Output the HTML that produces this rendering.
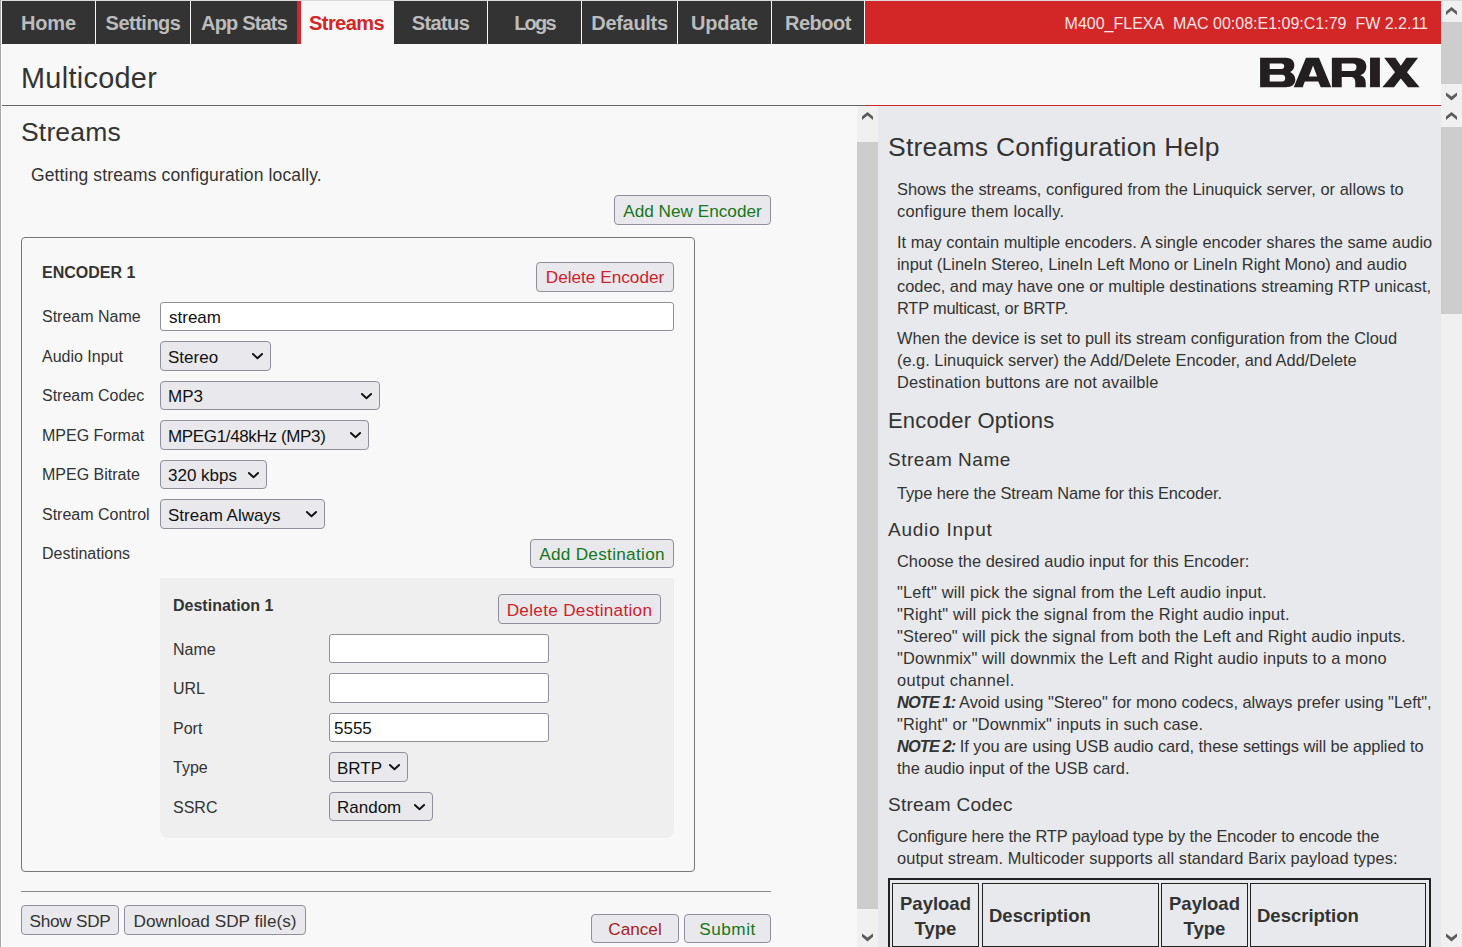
<!DOCTYPE html>
<html><head><meta charset="utf-8">
<style>
*{box-sizing:border-box}
html,body{margin:0;padding:0;width:1462px;height:947px;overflow:hidden;background:#f8f8f8;font-family:"Liberation Sans",sans-serif;color:#333;position:relative}
.a{position:absolute}
.tab{position:absolute;top:1px;height:43px;background:#333;color:#bcbcbc;font-weight:bold;font-size:20px;letter-spacing:-0.5px;display:flex;align-items:center;justify-content:center;padding-top:1px}
.sb{position:absolute;width:21px;background:#f0f0f0}
.thumb{position:absolute;left:0;width:21px;background:#cdcdcd}
.chev{position:absolute;left:5px;width:11px;height:9px}
.btn{position:absolute;background:#e9e9ed;border:1px solid #8f8f9d;border-radius:4px;font-size:17.2px;display:flex;align-items:center;justify-content:center;white-space:nowrap}
.inp{position:absolute;background:#fff;border:1px solid #8f8f9d;border-radius:3px;font-size:17px;color:#111;padding-left:8px;padding-top:3px;display:flex;align-items:center}
.sel{position:absolute;background:#e9e9ed;border:1px solid #8f8f9d;border-radius:4px;font-size:17px;color:#111;padding-left:7px;padding-top:3px;display:flex;align-items:center}
.sel svg{position:absolute;right:7px;top:11px}
.lbl{position:absolute;font-size:16px;color:#333;white-space:nowrap}
.green{color:#15761d}
.red{color:#d0212b}
.hp{position:absolute;font-size:16.4px;line-height:22px;white-space:nowrap;color:#333}
.hh1{position:absolute;font-size:26.5px;line-height:30px;white-space:nowrap;color:#333}
.hh2{position:absolute;font-size:22px;line-height:26px;white-space:nowrap;color:#333}
.hh3{position:absolute;font-size:19px;line-height:22px;white-space:nowrap;color:#333}
.tc{border:1px solid #222;height:64px;font-weight:bold;font-size:18.5px;line-height:25px;text-align:center;color:#333;display:flex;align-items:center;justify-content:center;padding-top:2px}
</style></head><body>
<!-- left frame border -->
<div class="a" style="left:0;top:0;width:1px;height:947px;background:#a6a6a6"></div>
<div class="a" style="left:1px;top:0;width:1px;height:947px;background:#fff"></div>
<div class="a" style="left:1px;top:0;width:1461px;height:1px;background:#dcdcdc"></div>

<!-- nav -->
<div class="tab" style="left:2px;width:93px;letter-spacing:-0.17px">Home</div>
<div class="tab" style="left:96px;width:94px">Settings</div>
<div class="tab" style="left:191px;width:106px;letter-spacing:-0.83px">App Stats</div>
<div class="tab" style="left:297px;width:97px;background:#f8f8f8;color:#d32627;border-left:4px solid #d32627;padding-left:0;padding-right:2px;letter-spacing:-0.58px">Streams</div>
<div class="tab" style="left:394px;width:93px;letter-spacing:-0.6px">Status</div>
<div class="tab" style="left:488px;width:93px;letter-spacing:-1.8px">Logs</div>
<div class="tab" style="left:582px;width:95px;letter-spacing:-0.3px">Defaults</div>
<div class="tab" style="left:678px;width:93px;letter-spacing:-0.1px">Update</div>
<div class="tab" style="left:772px;width:92px;letter-spacing:-0.5px">Reboot</div>
<div class="a" style="left:865px;top:1px;width:576px;height:43px;background:#d32627;color:#fbe4e4;font-size:16px;line-height:45px;text-align:right;padding-right:13px;overflow:hidden;white-space:nowrap">M400_FLEXA&nbsp; MAC 00:08:E1:09:C1:79&nbsp; FW 2.2.11</div>

<!-- header -->
<div class="a" style="left:21px;top:58px;font-size:28.8px;color:#333;line-height:40px;letter-spacing:0.33px">Multicoder</div>
<svg class="a" style="left:1250px;top:50px" width="180" height="50" viewBox="0 0 1462 406">
<path fill="#231f20" fill-rule="evenodd" d="M82,62 H290 C345,62 360,95 360,125 C360,150 345,168 325,178 C350,188 368,210 368,240 C368,280 340,302 290,302 H82 Z M160,110 H255 C270,110 278,120 278,132 C278,145 270,155 255,155 H160 Z M160,200 H262 C278,200 286,212 286,227 C286,243 278,255 262,255 H160 Z"/>
<path fill="#231f20" fill-rule="evenodd" d="M455,62 H560 L660,302 H575 L555,255 H445 L428,302 H355 Z M478,215 L512,125 L545,215 Z"/>
<path fill="#231f20" fill-rule="evenodd" d="M665,62 H860 C915,62 945,90 945,135 C945,170 925,195 895,205 C930,215 940,240 940,270 V302 H855 V265 C855,235 845,220 815,220 H745 V302 H665 Z M745,110 H835 C855,110 865,120 865,140 C865,160 855,170 835,170 H745 Z"/>
<path fill="#231f20" d="M975,62 H1055 V302 H975 Z"/>
<path fill="#231f20" d="M1090,62 H1180 L1225,128 L1270,62 H1365 L1275,180 L1378,302 H1283 L1225,232 L1170,302 H1075 L1178,180 Z"/>
</svg>
<div class="a" style="left:2px;top:105px;width:863px;height:1px;background:#666"></div>
<div class="a" style="left:865px;top:105px;width:576px;height:1px;background:#d32627"></div>

<!-- top scrollbar -->
<div class="sb" style="left:1441px;top:1px;height:105px">
  <svg class="chev" style="top:6px" viewBox="0 0 11 9"><path d="M0,4.6 L5.5,0 L11,4.6 L11,8 L5.5,3.6 L0,8 Z" fill="#5c5c5c"/></svg>
  <div class="thumb" style="top:21px;height:62px"></div>
  <svg class="chev" style="top:91px" viewBox="0 0 11 9"><path d="M0,0.4 L5.5,4.6 L11,0.4 L11,3.8 L5.5,8.4 L0,3.8 Z" fill="#5c5c5c"/></svg>
</div>

<!-- CONTENT -->
<div id="content">
<div class="a" style="left:21px;top:114px;font-size:26.5px;line-height:36px;color:#333;letter-spacing:0.17px">Streams</div>
<div class="a" style="left:31px;top:163px;font-size:17.5px;line-height:24px;color:#333;white-space:nowrap;letter-spacing:0.135px">Getting streams configuration locally.</div>
<div class="btn green" style="left:614px;top:195px;width:157px;height:30px;padding-top:2px">Add New Encoder</div>

<div class="a" style="left:21px;top:237px;width:674px;height:635px;border:1px solid #777;border-radius:4px"></div>
<div class="lbl" style="left:42px;top:264px;font-weight:bold">ENCODER 1</div>
<div class="btn red" style="left:536px;top:262px;width:138px;height:30px">Delete Encoder</div>

<div class="lbl" style="left:42px;top:308px">Stream Name</div>
<div class="inp" style="left:160px;top:302px;width:514px;height:29px">stream</div>
<div class="lbl" style="left:42px;top:348px">Audio Input</div>
<div class="sel" style="left:160px;top:341px;width:111px;height:30px">Stereo<svg width="11" height="7" viewBox="0 0 11 7"><path d="M0.9,1 L5.5,5.2 L10.1,1" fill="none" stroke="#111" stroke-width="1.9" stroke-linecap="round" stroke-linejoin="round"/></svg></div>
<div class="lbl" style="left:42px;top:387px">Stream Codec</div>
<div class="sel" style="left:160px;top:381px;width:220px;height:29px">MP3<svg width="11" height="7" viewBox="0 0 11 7"><path d="M0.9,1 L5.5,5.2 L10.1,1" fill="none" stroke="#111" stroke-width="1.9" stroke-linecap="round" stroke-linejoin="round"/></svg></div>
<div class="lbl" style="left:42px;top:427px">MPEG Format</div>
<div class="sel" style="left:160px;top:420px;width:209px;height:30px"><span style="letter-spacing:-0.35px">MPEG1/48kHz (MP3)</span><svg width="11" height="7" viewBox="0 0 11 7"><path d="M0.9,1 L5.5,5.2 L10.1,1" fill="none" stroke="#111" stroke-width="1.9" stroke-linecap="round" stroke-linejoin="round"/></svg></div>
<div class="lbl" style="left:42px;top:466px">MPEG Bitrate</div>
<div class="sel" style="left:160px;top:460px;width:107px;height:29px">320 kbps<svg width="11" height="7" viewBox="0 0 11 7"><path d="M0.9,1 L5.5,5.2 L10.1,1" fill="none" stroke="#111" stroke-width="1.9" stroke-linecap="round" stroke-linejoin="round"/></svg></div>
<div class="lbl" style="left:42px;top:506px">Stream Control</div>
<div class="sel" style="left:160px;top:499px;width:165px;height:30px">Stream Always<svg width="11" height="7" viewBox="0 0 11 7"><path d="M0.9,1 L5.5,5.2 L10.1,1" fill="none" stroke="#111" stroke-width="1.9" stroke-linecap="round" stroke-linejoin="round"/></svg></div>
<div class="lbl" style="left:42px;top:545px">Destinations</div>
<div class="btn green" style="left:530px;top:539px;width:144px;height:29px;letter-spacing:0.29px;padding-top:2px">Add Destination</div>

<div class="a" style="left:160px;top:578px;width:514px;height:260px;background:#efeff0;border-radius:0 0 8px 8px"></div>
<div class="lbl" style="left:173px;top:597px;font-weight:bold">Destination 1</div>
<div class="btn red" style="left:498px;top:594px;width:163px;height:30px;letter-spacing:0.29px;padding-top:2px">Delete Destination</div>
<div class="lbl" style="left:173px;top:641px">Name</div>
<div class="inp" style="left:329px;top:634px;width:220px;height:29px"></div>
<div class="lbl" style="left:173px;top:680px">URL</div>
<div class="inp" style="left:329px;top:673px;width:220px;height:30px"></div>
<div class="lbl" style="left:173px;top:720px">Port</div>
<div class="inp" style="left:329px;top:713px;width:220px;height:29px;padding-left:4px">5555</div>
<div class="lbl" style="left:173px;top:759px">Type</div>
<div class="sel" style="left:329px;top:752px;width:79px;height:30px">BRTP<svg width="11" height="7" viewBox="0 0 11 7"><path d="M0.9,1 L5.5,5.2 L10.1,1" fill="none" stroke="#111" stroke-width="1.9" stroke-linecap="round" stroke-linejoin="round"/></svg></div>
<div class="lbl" style="left:173px;top:799px">SSRC</div>
<div class="sel" style="left:329px;top:792px;width:104px;height:29px">Random<svg width="11" height="7" viewBox="0 0 11 7"><path d="M0.9,1 L5.5,5.2 L10.1,1" fill="none" stroke="#111" stroke-width="1.9" stroke-linecap="round" stroke-linejoin="round"/></svg></div>

<div class="a" style="left:21px;top:891px;width:750px;height:1px;background:#888"></div>
<div class="btn" style="left:21px;top:905px;width:98px;height:30px;letter-spacing:-0.27px;padding-top:2px">Show SDP</div>
<div class="btn" style="left:124px;top:905px;width:182px;height:30px;padding-top:2px">Download SDP file(s)</div>
<div class="btn" style="left:591px;top:914px;width:88px;height:29px;color:#a81c1c;padding-top:2px">Cancel</div>
<div class="btn green" style="left:684px;top:914px;width:87px;height:29px;letter-spacing:0.5px;padding-top:2px">Submit</div>
</div>

<!-- left pane scrollbar -->
<div class="sb" style="left:857px;top:106px;height:841px">
  <svg class="chev" style="top:5.5px" viewBox="0 0 11 9"><path d="M0,4.6 L5.5,0 L11,4.6 L11,8 L5.5,3.6 L0,8 Z" fill="#5c5c5c"/></svg>
  <div class="thumb" style="top:36px;height:767px"></div>
  <svg class="chev" style="top:827px" viewBox="0 0 11 9"><path d="M0,0.4 L5.5,4.6 L11,0.4 L11,3.8 L5.5,8.4 L0,3.8 Z" fill="#5c5c5c"/></svg>
</div>

<!-- HELP -->
<div id="help" class="a" style="left:878px;top:106px;width:563px;height:841px;background:#e8e9ec;overflow:hidden">
<div class="hh1" style="left:10px;top:26px;letter-spacing:0.236px">Streams Configuration Help</div>
<div class="hp" style="left:19px;top:72px;letter-spacing:0.029px">Shows the streams, configured from the Linuquick server, or allows to</div>
<div class="hp" style="left:19px;top:94px;letter-spacing:0.232px">configure them locally.</div>
<div class="hp" style="left:19px;top:125px;letter-spacing:0.005px">It may contain multiple encoders. A single encoder shares the same audio</div>
<div class="hp" style="left:19px;top:147px;letter-spacing:-0.047px">input (LineIn Stereo, LineIn Left Mono or LineIn Right Mono) and audio</div>
<div class="hp" style="left:19px;top:169px;letter-spacing:-0.003px">codec, and may have one or multiple destinations streaming RTP unicast,</div>
<div class="hp" style="left:19px;top:191px;letter-spacing:-0.196px">RTP multicast, or BRTP.</div>
<div class="hp" style="left:19px;top:221px;letter-spacing:0.012px">When the device is set to pull its stream configuration from the Cloud</div>
<div class="hp" style="left:19px;top:243px;letter-spacing:-0.008px">(e.g. Linuquick server) the Add/Delete Encoder, and Add/Delete</div>
<div class="hp" style="left:19px;top:265px;letter-spacing:0.154px">Destination buttons are not availble</div>
<div class="hh2" style="left:10px;top:302px;letter-spacing:0.172px">Encoder Options</div>
<div class="hh3" style="left:10px;top:343px;letter-spacing:0.510px">Stream Name</div>
<div class="hp" style="left:19px;top:376px;letter-spacing:-0.092px">Type here the Stream Name for this Encoder.</div>
<div class="hh3" style="left:10px;top:413px;letter-spacing:0.760px">Audio Input</div>
<div class="hp" style="left:19px;top:444px;letter-spacing:0.030px">Choose the desired audio input for this Encoder:</div>
<div class="hp" style="left:19px;top:475px;letter-spacing:0.171px">"Left" will pick the signal from the Left audio input.</div>
<div class="hp" style="left:19px;top:497px;letter-spacing:0.184px">"Right" will pick the signal from the Right audio input.</div>
<div class="hp" style="left:19px;top:519px;letter-spacing:0.107px">"Stereo" will pick the signal from both the Left and Right audio inputs.</div>
<div class="hp" style="left:19px;top:541px;letter-spacing:0.153px">"Downmix" will downmix the Left and Right audio inputs to a mono</div>
<div class="hp" style="left:19px;top:563px;letter-spacing:0.378px">output channel.</div>
<div class="hp" style="left:19px;top:585px;letter-spacing:-0.007px"><b style="font-size:16.4px;letter-spacing:-0.9px"><i>NOTE 1:</i></b> Avoid using "Stereo" for mono codecs, always prefer using "Left",</div>
<div class="hp" style="left:19px;top:607px;letter-spacing:0.121px">"Right" or "Downmix" inputs in such case.</div>
<div class="hp" style="left:19px;top:629px;letter-spacing:-0.055px"><b style="font-size:16.4px;letter-spacing:-0.9px"><i>NOTE 2:</i></b> If you are using USB audio card, these settings will be applied to</div>
<div class="hp" style="left:19px;top:651px;letter-spacing:0.003px">the audio input of the USB card.</div>
<div class="hh3" style="left:10px;top:688px;letter-spacing:0.273px">Stream Codec</div>
<div class="hp" style="left:19px;top:719px;letter-spacing:-0.102px">Configure here the RTP payload type by the Encoder to encode the</div>
<div class="hp" style="left:19px;top:741px;letter-spacing:0.102px">output stream. Multicoder supports all standard Barix payload types:</div>
<div class="a" style="left:10px;top:772px;width:543px;height:120px;border:2px solid #222"></div>
<div class="a tc" style="left:14px;top:777px;width:87px">Payload<br>Type</div>
<div class="a tc" style="left:104px;top:777px;width:177px;justify-content:flex-start;padding-left:6px;padding-top:0">Description</div>
<div class="a tc" style="left:283px;top:777px;width:87px">Payload<br>Type</div>
<div class="a tc" style="left:372px;top:777px;width:176px;justify-content:flex-start;padding-left:6px;padding-top:0">Description</div>
</div>

<!-- right scrollbar -->
<div class="sb" style="left:1441px;top:106px;height:841px">
  <svg class="chev" style="top:5.5px" viewBox="0 0 11 9"><path d="M0,4.6 L5.5,0 L11,4.6 L11,8 L5.5,3.6 L0,8 Z" fill="#5c5c5c"/></svg>
  <div class="thumb" style="top:21px;height:187px"></div>
  <svg class="chev" style="top:827px" viewBox="0 0 11 9"><path d="M0,0.4 L5.5,4.6 L11,0.4 L11,3.8 L5.5,8.4 L0,3.8 Z" fill="#5c5c5c"/></svg>
</div>
</body></html>
